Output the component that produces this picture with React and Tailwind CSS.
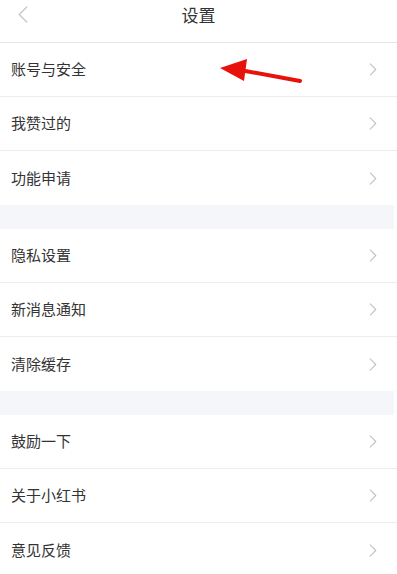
import React from "react"

const groups = [
  ["账号与安全", "我赞过的", "功能申请"],
  ["隐私设置", "新消息通知", "清除缓存"],
  ["鼓励一下", "关于小红书", "意见反馈"],
]

function Chevron({ className }) {
  return (
    <svg viewBox="0 0 8 14" className={className} fill="none">
      <path d="M1 1l6 6-6 6" stroke="currentColor" strokeWidth="1.2" strokeLinecap="round" strokeLinejoin="round" />
    </svg>
  )
}

function Row({ label, last, children }) {
  return (
    <div className={`relative flex h-[54px] items-center justify-between bg-white pl-[11px] pr-[20px] ${last ? "" : "border-b border-[#ececec]"}`}>
      <span className="text-[15px] text-[#333]">{label}</span>
      <Chevron className="h-[13px] w-[8px] text-[#c4c4c4]" />
      {children}
    </div>
  )
}

export default function App() {
  return (
    <div className="w-[397px] h-[574px] overflow-hidden bg-white font-['Noto_Sans_CJK_SC','Noto_Sans',sans-serif]">
      {/* header */}
      <div className="relative flex h-[43px] items-center justify-center border-b border-[#e6e6e6]">
        <svg viewBox="0 0 12 18" className="absolute left-[17px] top-[6px] h-[17px] w-[12px] text-[#c8c8c8]" fill="none">
          <path d="M10 1L2 9l8 8" stroke="currentColor" strokeWidth="1.4" strokeLinecap="round" strokeLinejoin="round" />
        </svg>
        <span className="-mt-[12px] text-[17px] text-[#333]">设置</span>
      </div>

      {groups.map((items, gi) => (
        <div key={gi}>
          {gi > 0 && <div className="mr-[3px] h-[24px] bg-[#f4f6f9]" />}
          {items.map((label, i) => (
            <Row key={label} label={label} last={i === items.length - 1}>
              {gi === 0 && i === 0 && (
                <svg viewBox="0 0 90 30" className="absolute left-[216px] top-[13px] h-[30px] w-[90px]">
                  <line x1="84" y1="25" x2="24" y2="14" stroke="#e8120c" strokeWidth="4" strokeLinecap="round" />
                  <polygon points="4,12 31,3 28,25" fill="#e8120c" />
                </svg>
              )}
            </Row>
          ))}
        </div>
      ))}
    </div>
  )
}
